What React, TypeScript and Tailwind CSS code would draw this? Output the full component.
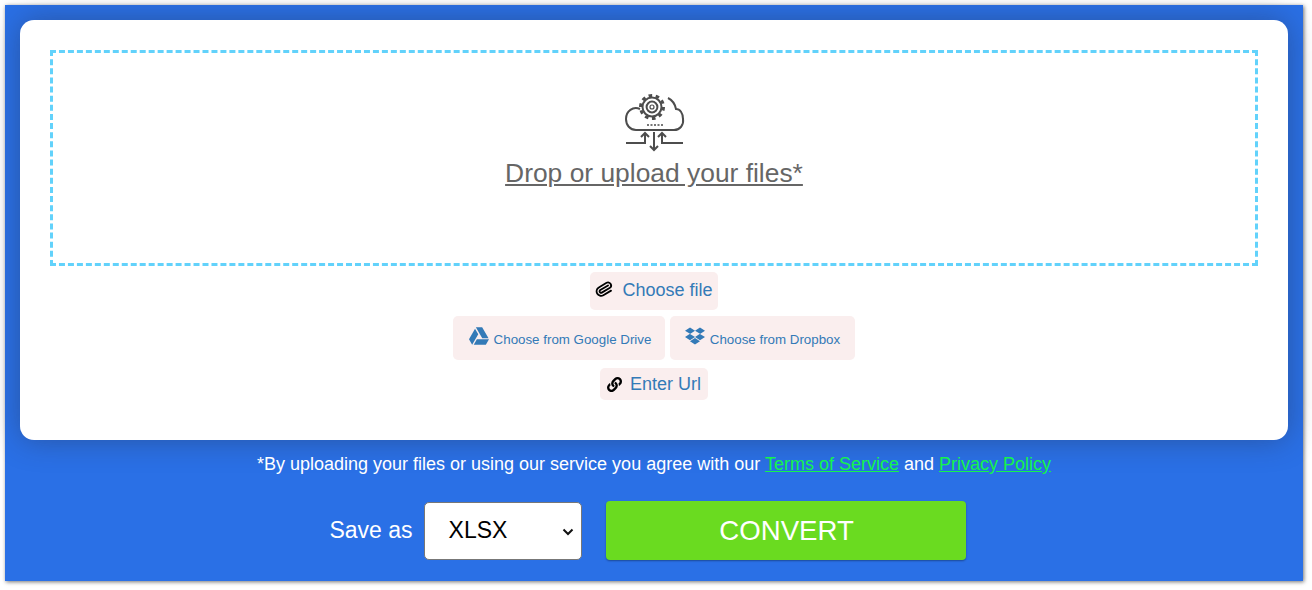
import React from 'react';
import { FaDropbox, FaGoogleDrive, FaLink } from 'react-icons/fa';
import { Paperclip } from 'lucide-react';

const CloudGear = () => (
  <svg className="ml-[2px]" width="60" height="62" viewBox="0 0 60 62" fill="none" stroke="#4d4d4d" strokeWidth="2">
    {/* cloud outline, broken where the gear sits */}
    <path d="M15 18 C8 15 1 20 1 28 C1 34 5 39 11 39 L49 39 C55 39 59 34 58 28 C58 22 55 18 51 18 C50 13 47 9 43 7" />
    {/* gear */}
    <circle cx="27" cy="16" r="11.5" strokeWidth="3" strokeDasharray="3.6 3.6" />
    <circle cx="27" cy="16" r="9.5" strokeWidth="2" />
    <circle cx="27" cy="16" r="5.4" strokeWidth="2" />
    <circle cx="27" cy="16" r="2" strokeWidth="1.2" />
    {/* dots */}
    <path d="M22 34 H38" strokeWidth="2" strokeDasharray="2 1.5" stroke="#777" />
    {/* arrows */}
    <path d="M1 52 H20 V42 M16 46 L20 42 L24 46" />
    <path d="M58 52 H37 V42 M33 46 L37 42 L41 46" />
    <path d="M29 41 V59 M25 55 L29 59 L33 55" />
  </svg>
);

export default function App() {
  return (
    <div className="bg-white h-[590px] pt-[5px] pl-[5px] font-['Liberation_Sans',Arial,sans-serif]">
      <div className="w-[1298px] h-[576px] bg-[#2a70e6] shadow-[1px_1px_4px_rgba(0,0,0,0.55)] p-[15px]">
        <div className="w-[1268px] h-[420px] bg-white rounded-[14px] shadow-[0_0_30px_rgba(40,50,80,0.45)] pt-[30px] px-[30px] flex flex-col items-center">
          <div className="w-full h-[216px] border-[3px] border-dashed border-[#62d2fb] flex flex-col items-center pt-[38px] shrink-0">
            <CloudGear />
            <a className="text-[26.4px] leading-[28px] text-[#666] underline mt-[6px]">Drop or upload your files*</a>
          </div>

          <button className="mt-[6px] h-[38px] w-[128px] bg-[#faeeee] rounded-[5px] flex items-center justify-center text-[18px] text-[#337ab7]">
            <Paperclip size={18} strokeWidth={2.4} className="text-black mr-[9px] -mt-[4px] rotate-[15deg]" />
            <span className="-mt-[1px]">Choose file</span>
          </button>

          <div className="mt-[6px] flex gap-[5px]">
            <button className="h-[44px] w-[212px] bg-[#faeeee] rounded-[5px] flex items-center justify-center text-[13.33px] text-[#337ab7]">
              <FaGoogleDrive className="text-[20px] ml-[2px] mr-[5px] -mt-[5px]" />
              <span className="mt-[4px]">Choose from Google Drive</span>
            </button>
            <button className="h-[44px] w-[185px] bg-[#faeeee] rounded-[5px] flex items-center justify-center text-[13.33px] text-[#337ab7]">
              <FaDropbox className="text-[20px] mr-[5px] -mt-[5px]" />
              <span className="mt-[4px]">Choose from Dropbox</span>
            </button>
          </div>

          <button className="mt-[8px] h-[32px] w-[108px] bg-[#faeeee] rounded-[5px] flex items-center justify-center text-[18px] text-[#337ab7]">
            <FaLink className="text-black text-[15px] mr-[8px]" />
            Enter Url
          </button>
        </div>

        <p className="mt-[14px] text-center text-[18px] leading-[20px] text-white">
          *By uploading your files or using our service you agree with our{' '}
          <a className="text-[#14f44c] underline">Terms of Service</a> and{' '}
          <a className="text-[#14f44c] underline">Privacy Policy</a>
        </p>

        <div className="mt-[27px] pr-[13px] flex items-center justify-center">
          <span className="text-[23px] text-white mr-[11px]">Save as</span>
          <div className="relative w-[158px] h-[58px] bg-white border border-[#777] rounded-[5px] flex items-center pl-[24px] text-[23px] text-black">
            XLSX
            <svg className="absolute right-[7px] top-[25px]" width="12" height="8" viewBox="0 0 12 8" fill="none" stroke="#111" strokeWidth="2">
              <path d="M1.5 1.5 L6 6 L10.5 1.5" />
            </svg>
          </div>
          <button className="ml-[24px] pl-[2px] w-[360px] h-[59px] bg-[#6adb20] rounded-[4px] text-[27.6px] text-white shadow-[0_1px_2px_rgba(0,0,0,0.35)]">
            CONVERT
          </button>
        </div>
      </div>
    </div>
  );
}
